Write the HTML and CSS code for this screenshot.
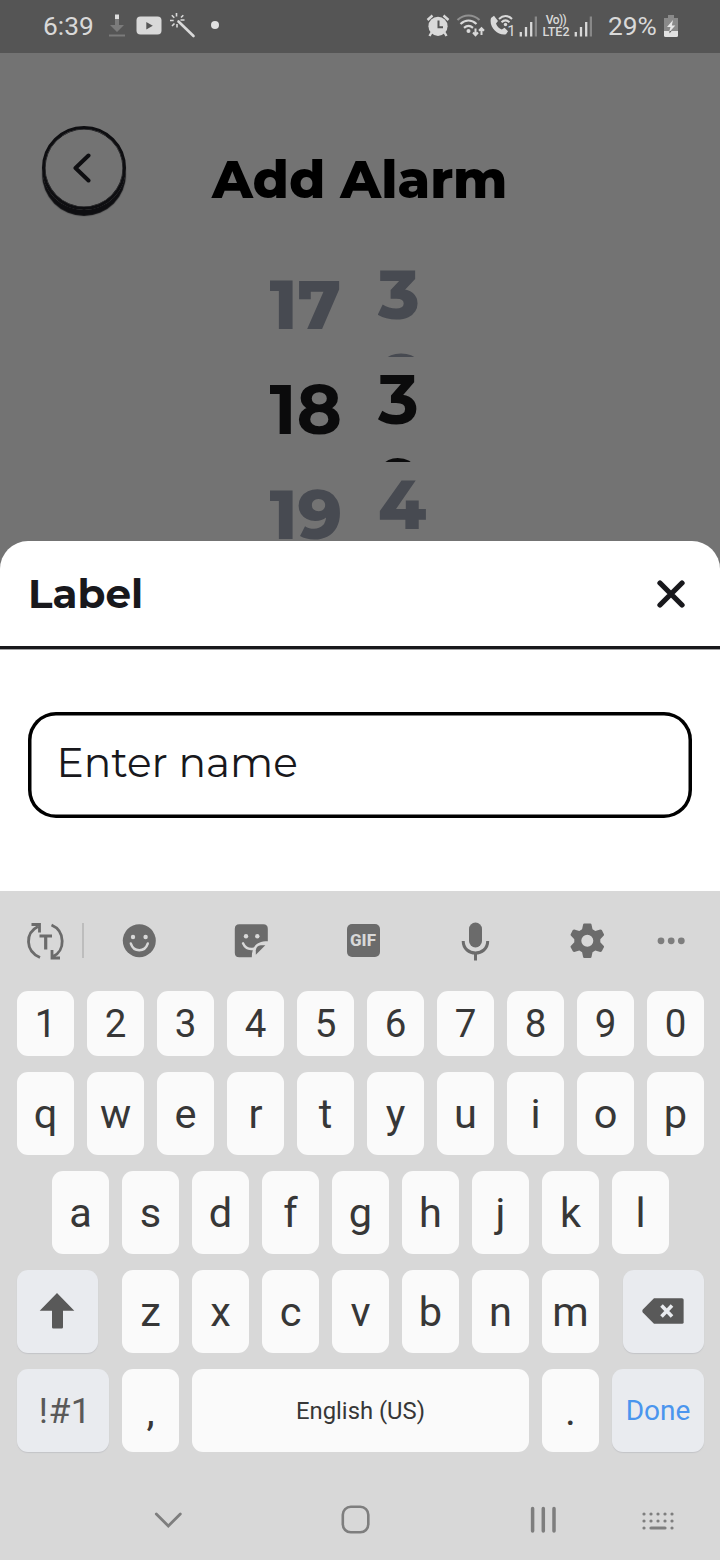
FILE: index.html
```html
<!DOCTYPE html>
<html lang="en">
<head>
<meta charset="utf-8">
<title>Add Alarm</title>
<link rel="stylesheet" href="styles.css">
</head>
<body>
<div class="phone">
  <header class="status">
    <span class="status-time">6:39</span>
    <svg class="s-download" width="18" height="24" viewBox="0 0 18 24"><path d="M7 5h4v6h5l-7 7-7-7h5z" fill="#7b7b7b"/><path d="M7 .5h4v4.500H7z" fill="#ddd"/><path d="M1 20.500h16v2H1z" fill="#7b7b7b"/></svg>
    <svg class="s-video" width="26" height="20" viewBox="0 0 26 20"><rect x=".5" y=".5" width="25" height="18" rx="4" fill="#d9d9d9"/><path d="M10.300 6v7.500l6.500-3.700z" fill="#555"/></svg>
    <svg class="s-wand" width="26" height="26" viewBox="0 0 26 26" stroke="#d9d9d9" fill="none"><path d="M8.500 8.500l15 14.500" stroke-width="2.600" stroke-linecap="round"/><path d="M6.500 0v3.500M1.800 2.200l2.500 2.500M0 7.500h3.700M2 13l2.500-2.500M7 11v3.500M11 4.500l2.300-2.300M10.500 7h4" stroke-width="1.600"/></svg>
    <i class="s-dot"></i>
    <svg class="s-alarm" width="24" height="24" viewBox="0 0 24 24"><circle cx="12" cy="12.300" r="9.600" fill="#d9d9d9"/><path d="M5.500 18.500l-2 3.500M18.500 18.500l2 3.500M1.500 6l5-4.500M22.500 6l-5-4.500" stroke="#d9d9d9" stroke-width="2.400"/><path d="M12.500 6.500v6.800h4.500" stroke="#555" stroke-width="2" fill="none"/></svg>
    <svg class="s-wifi" width="29" height="24" viewBox="0 0 29 24" fill="none" stroke-width="2.200"><path d="M1.500 6c6.500-6 15.500-6 22 0" stroke="#919191"/><path d="M4.500 10c5-4.500 11-4.500 16 0M8 13.800c3-2.500 6-2.500 9 0" stroke="#d9d9d9"/><circle cx="12.500" cy="17" r="2" fill="#d9d9d9"/><path d="M19.500 14.500v6.500M17 18.500l2.500 2.700 2.500-2.700M25.500 21v-6.500M23 16.800l2.500-2.600 2.500 2.600" stroke="#d9d9d9" stroke-width="2"/></svg>
    <svg class="s-call" width="25" height="24" viewBox="0 0 25 24"><path d="M1 4l3-2.200 4 5.200-2 2.600c1 3 3 5 5.800 5.900l2.700-1.700 3.500 3.500-2 3C8 22-1.500 13 1 4z" fill="#d9d9d9"/><path d="M9 5c4-4 9-4 13 0M11.500 8.300c2.600-2.500 5.400-2.500 8 0" stroke="#d9d9d9" stroke-width="2" fill="none"/><circle cx="15.500" cy="10.500" r="1.700" fill="#d9d9d9"/><text x="17.300" y="21.500" class="s-sim">1</text></svg>
    <svg class="s-signal" width="18" height="21" viewBox="0 0 18 21" stroke-width="2.300"><path d="M1.800 20.500v-4.500M7 20.500v-9.500M12.200 20.500V6" stroke="#d9d9d9"/><path d="M16.900 20.500V.5" stroke="#888"/></svg>
    <div class="s-volte"><span class="vo">Vo))</span><span>LTE2</span></div>
    <svg class="s-signal s-signal2" width="18" height="21" viewBox="0 0 18 21" stroke-width="2.300"><path d="M1.800 20.500v-4.500M7 20.500v-9.500M12.200 20.500V6" stroke="#d9d9d9"/><path d="M16.900 20.500V.5" stroke="#888"/></svg>
    <span class="status-pct">29%</span>
    <svg class="s-battery" width="14" height="22" viewBox="0 0 14 22"><path d="M4 0h6v3h4v13H0V3h4z" fill="#8a8a8a"/><path d="M0 16h14v4.500q0 1.500-1.500 1.500h-11Q0 22 0 20.500z" fill="#e2e2e2"/><path d="M9 5l-6 7h3.500L5 17.500l6.300-7H7.800z" fill="#e8e8e8"/><path d="M5.500 16h2l-2 2.500z" fill="#555"/></svg>
  </header>

  <main class="screen">
    <div class="titlebar">
      <button class="back" aria-label="Back"><svg width="18" height="30" viewBox="0 0 18 30"><path d="M15.500 2.500L2.500 15l13 12.500" fill="none" stroke="#0e0e11" stroke-width="4" stroke-linecap="round" stroke-linejoin="round"/></svg></button>
      <h1>Add Alarm</h1>
    </div>
    <div class="wheels">
      <div class="wheel hours"><div>17</div><div class="on">18</div><div>19</div></div>
      <div class="wheel minutes"><div>38</div><div class="on">39</div><div>40</div></div>
    </div>
  </main>

  <section class="sheet">
    <div class="sheet-head">
      <h2>Label</h2>
      <svg width="28" height="28" viewBox="0 0 28 28"><path d="M3 3l22 22M25 3L3 25" stroke="#18181c" stroke-width="5.300" stroke-linecap="round"/></svg>
    </div>
    <div class="field">Enter name</div>
  </section>

  <section class="keyboard">
    <div class="tools">
      <div class="tool first"><svg width="38" height="38" viewBox="0 0 38 38" fill="none" stroke="#6b6b6b" stroke-width="2.800"><path d="M14 35.500C-1 29-1 11 12 4.500M5.500 2.500h8v8M25.500 3C39.500 9 39.500 29 27 34.500M34 36h-8V28"/><path d="M13.500 14h12.500M19.700 14v13.500" stroke-width="3.200"/></svg></div>
      <i class="divider"></i>
      <div class="tool"><svg width="34" height="34" viewBox="0 0 34 34"><circle cx="17.300" cy="16.700" r="16.500" fill="#6b6b6b"/><circle cx="11" cy="13" r="2.200" fill="#d8d8d8"/><circle cx="23.600" cy="13" r="2.200" fill="#d8d8d8"/><path d="M8.800 19.500c3 9 14 9 17 0" fill="none" stroke="#d8d8d8" stroke-width="2.400" stroke-linecap="round"/></svg></div>
      <div class="tool"><svg width="34" height="34" viewBox="0 0 34 34"><path d="M5.300.2h24q4.500 0 4.500 4.500v12.500c-11 0-16 5-16 16H5.300Q.8 33.200.8 28.700V4.700Q.8.200 5.300.2z" fill="#6b6b6b"/><circle cx="12" cy="12.300" r="2.200" fill="#d8d8d8"/><circle cx="23.300" cy="12.300" r="2.200" fill="#d8d8d8"/><path d="M9 19.300c2 4.500 6 6.300 10.500 5.500" fill="none" stroke="#d8d8d8" stroke-width="2.400" stroke-linecap="round"/><path d="M21.800 30.700v-4.500q.5-4.500 5-5h4.500z" fill="#6b6b6b"/></svg></div>
      <div class="tool"><span class="gif">GIF</span></div>
      <div class="tool"><svg width="30" height="40" viewBox="0 0 30 40"><rect x="9" y="1.500" width="13" height="25" rx="6.500" fill="#6b6b6b"/><path d="M3.200 20c0 16 24.500 16 24.500 0M15.500 31v8.500" fill="none" stroke="#6b6b6b" stroke-width="3"/></svg></div>
      <div class="tool"><svg width="34" height="36" viewBox="0 0 34 36"><path transform="translate(.3 -.3)" fill="#6b6b6b" fill-rule="evenodd" d="M14 .7h6q1 0 1.200 1l1 4.800 2.800 1.700 5-1.500q1 0 1.500.700l2 3.800q.500 1 0 1.500L30 16.500v3l3.500 3.800q.5.500 0 1.500l-2 3.800q-.5.700-1.500.700l-5-1.500-2.800 1.700-1 4.800q-.2 1-1.200 1h-6q-1 0-1.200-1l-1-4.800L9 27.800l-5 1.500q-1 0-1.500-.700l-2-3.800q-.5-1 0-1.500L4 19.500v-3L.5 12.700q-.5-.5 0-1.500l2-3.800q.5-.700 1.500-.700l5 1.500 2.800-1.700 1-4.800q.2-1 1.200-1zM17 12a6 6 0 1 0 0 12 6 6 0 0 0 0-12z"/></svg></div>
      <div class="tool last"><svg width="28" height="8" viewBox="0 0 28 8" fill="#7e7e7e"><circle cx="4" cy="3.800" r="3.400"/><circle cx="14.200" cy="3.800" r="3.400"/><circle cx="24.300" cy="3.800" r="3.400"/></svg></div>
    </div>

    <div class="row digits"><b>1</b><b>2</b><b>3</b><b>4</b><b>5</b><b>6</b><b>7</b><b>8</b><b>9</b><b>0</b></div>
    <div class="row"><b>q</b><b>w</b><b>e</b><b>r</b><b>t</b><b>y</b><b>u</b><b>i</b><b>o</b><b>p</b></div>
    <div class="row"><b>a</b><b>s</b><b>d</b><b>f</b><b>g</b><b>h</b><b>j</b><b>k</b><b>l</b></div>
    <div class="row spread">
      <b class="fn shift"><svg width="36" height="38" viewBox="0 0 36 38"><path d="M18 1l17.300 17.700H24v16.500q0 1.300-1.300 1.300h-8.400q-1.300 0-1.300-1.300V18.700H.7z" fill="#595959"/></svg></b>
      <div class="group"><b>z</b><b>x</b><b>c</b><b>v</b><b>b</b><b>n</b><b>m</b></div>
      <b class="fn shift"><svg width="42" height="26" viewBox="0 0 42 26"><path d="M12 .2h28q1.600 0 1.600 1.600v22.400q0 1.600-1.600 1.600H12L.8 14.500q-1-1.500 0-3z" fill="#595959"/><path d="M19.500 7.500l10.500 11M30 7.500L19.500 18.500" stroke="#e9ebef" stroke-width="3.600"/></svg></b>
    </div>
    <div class="row">
      <b class="fn wide sym">!#1</b><b>,</b><b class="space">English (US)</b><b>.</b><b class="fn wide done">Done</b>
    </div>

    <nav class="nav">
      <div><svg width="28" height="18" viewBox="0 0 28 18"><path d="M2.300 3l12 12 12-12" fill="none" stroke="#7e7e7e" stroke-width="2.800" stroke-linecap="round"/></svg></div>
      <div><svg width="30" height="30" viewBox="0 0 30 30"><rect x="1.800" y="1.800" width="25.500" height="25.500" rx="8" fill="none" stroke="#7e7e7e" stroke-width="2.600"/></svg></div>
      <div><svg width="28" height="28" viewBox="0 0 28 28"><path d="M3.600 2.500v22.500M14.300 2.500v22.500M25 2.500v22.500" stroke="#7e7e7e" stroke-width="3.500" stroke-linecap="round"/></svg></div>
      <div class="kb"><svg width="34" height="20" viewBox="0 0 34 20" stroke="#7e7e7e" stroke-width="3.200" stroke-linecap="round"><path d="M3 3h.01M10 3h.01M17 3h.01M24 3h.01M31 3h.01M3 10h.01M10 10h.01M17 10h.01M24 10h.01M31 10h.01M3 17h.01M31 17h.01M10 17h14"/></svg></div>
    </nav>
  </section>
</div>
</body>
</html>
```
FILE: styles.css
```css
* { box-sizing: border-box; }
body { margin: 0; background: #737373; font-family: Roboto, "Liberation Sans", sans-serif; }
svg { display: block; flex: none; }
.phone { width: 720px; height: 1560px; display: flex; flex-direction: column; overflow: hidden; }

.status { height: 53px; flex: none; background: #555; display: flex; align-items: center; padding-left: 43px; color: #d9d9d9; }
.status > * { flex: none; }
.status-time { font-size: 26.300px; width: 51px; line-height: 53px; white-space: nowrap; }
.s-download { margin-left: 14px; margin-top: -1px; }
.s-video { margin-left: 10px; margin-top: -1px; }
.s-wand { margin-left: 8px; margin-top: -1px; }
.s-dot { width: 8px; height: 8px; border-radius: 50%; background: #e2e2e2; margin: -3px 0 0 15px; }
.s-alarm { margin-left: 207px; margin-top: -2px; }
.s-wifi { margin-left: 6px; margin-top: -1px; }
.s-call { margin-left: 5px; margin-top: -1px; }
.s-sim { font: 15px Roboto, sans-serif; fill: #d9d9d9; }
.s-signal { margin-left: 4px; margin-top: -1px; }
.s-volte { width: 28px; margin: -2px 0 0 5px; display: flex; flex-direction: column; align-items: center; font-size: 12.500px; font-weight: 500; line-height: 11px; white-space: nowrap; }
.vo { font-size: 12px; letter-spacing: -.6px; }
.s-signal2 { margin-left: 4px; }
.status-pct { font-size: 26.300px; width: 50px; margin-left: 16px; line-height: 53px; white-space: nowrap; }
.s-battery { margin-left: 6px; margin-top: -1px; }

.screen { height: 488px; flex: none; font-family: Montserrat, sans-serif; }
.titlebar { height: 199px; padding: 73px 0 0 42px; display: flex; align-items: flex-start; }
.back { width: 84px; height: 84px; padding: 0 4px 0 0; border: 3px solid #0e0e11; border-radius: 50%; background: transparent; box-shadow: 0 6px 1px #0e0e11, inset 0 0 0 .5px #0e0e11; display: flex; align-items: center; justify-content: center; }
h1 { margin: 22px 0 0 86px; font-size: 52px; line-height: 64px; font-weight: 800; color: #000; white-space: nowrap; }
.wheels { display: flex; padding-left: 269.500px; }
.wheel { color: #474a51; font-size: 69px; font-weight: 800; line-height: 84px; }
.wheel div { height: 105px; overflow: hidden; }
.wheel .on { color: #0b0b0c; font-weight: 700; }
.hours { width: 108.500px; }
.hours div { padding-top: 10px; }
.minutes { width: 50px; word-break: break-all; }

.sheet { height: 350px; flex: none; background: #fff; border-radius: 28px 28px 0 0; font-family: Montserrat, sans-serif; color: #18181c; }
.sheet-head { height: 108px; border-bottom: 3px solid #18181c; box-shadow: 0 1px 0 #a0a0a2; display: flex; align-items: center; justify-content: space-between; padding: 0 35px 0 28px; }
h2 { margin: 0; font-size: 40.500px; line-height: 50px; font-weight: 700; }
.field { margin: 63px 28px 0; height: 105.500px; border-radius: 28px; box-shadow: inset 0 0 0 3.500px #000; padding: 0 28.500px 4px; display: flex; align-items: center; font-size: 40.700px; white-space: nowrap; }

.keyboard { flex: 1; background: #d8d8d8; color: #373737; display: flex; flex-direction: column; }
.tools { height: 100px; flex: none; display: flex; align-items: center; padding: 0 0 1px 8px; }
.tool { width: 112px; display: flex; justify-content: center; }
.tool.first { width: 74px; }
.tool.last { width: 56px; }
.divider { width: 2px; height: 35px; background: #bdbdbd; margin-right: -1px; }
.gif { width: 33px; height: 33px; border-radius: 5px; background: #6b6b6b; color: #d8d8d8; font-size: 17px; line-height: 33px; font-weight: 800; text-align: center; }
.row { height: 83px; flex: none; margin-bottom: 16px; padding: 0 16px 0 17px; display: flex; gap: 13px; justify-content: center; }
.row b { width: 57px; height: 83px; flex: none; border-radius: 11px; background: #fafafa; font-size: 41.500px; font-weight: 400; display: flex; align-items: center; justify-content: center; }
.row.digits, .row.digits b { height: 65px; }
.row.digits b { font-size: 38.500px; }
.spread { justify-content: space-between; }
.group { display: flex; gap: 13px; }
.row .fn { background: #e9ebef; box-shadow: 0 1px 1px #c4c5c8; }
.row .shift { width: 81px; padding: 0 1px 1px 0; }
.row .wide { width: 92px; }
.row .sym { font-size: 35.500px; color: #595959; padding-left: 4px; letter-spacing: .5px; }
.row .space { width: 337px; font-size: 23.800px; }
.row .done { font-size: 28px; color: #4a95ee; }
.nav { height: 103px; padding: 0 0 0 74.500px; display: flex; align-items: center; }
.nav div { width: 187.500px; display: flex; justify-content: center; }
.nav .kb { width: 42px; padding-top: 3px; }
```
